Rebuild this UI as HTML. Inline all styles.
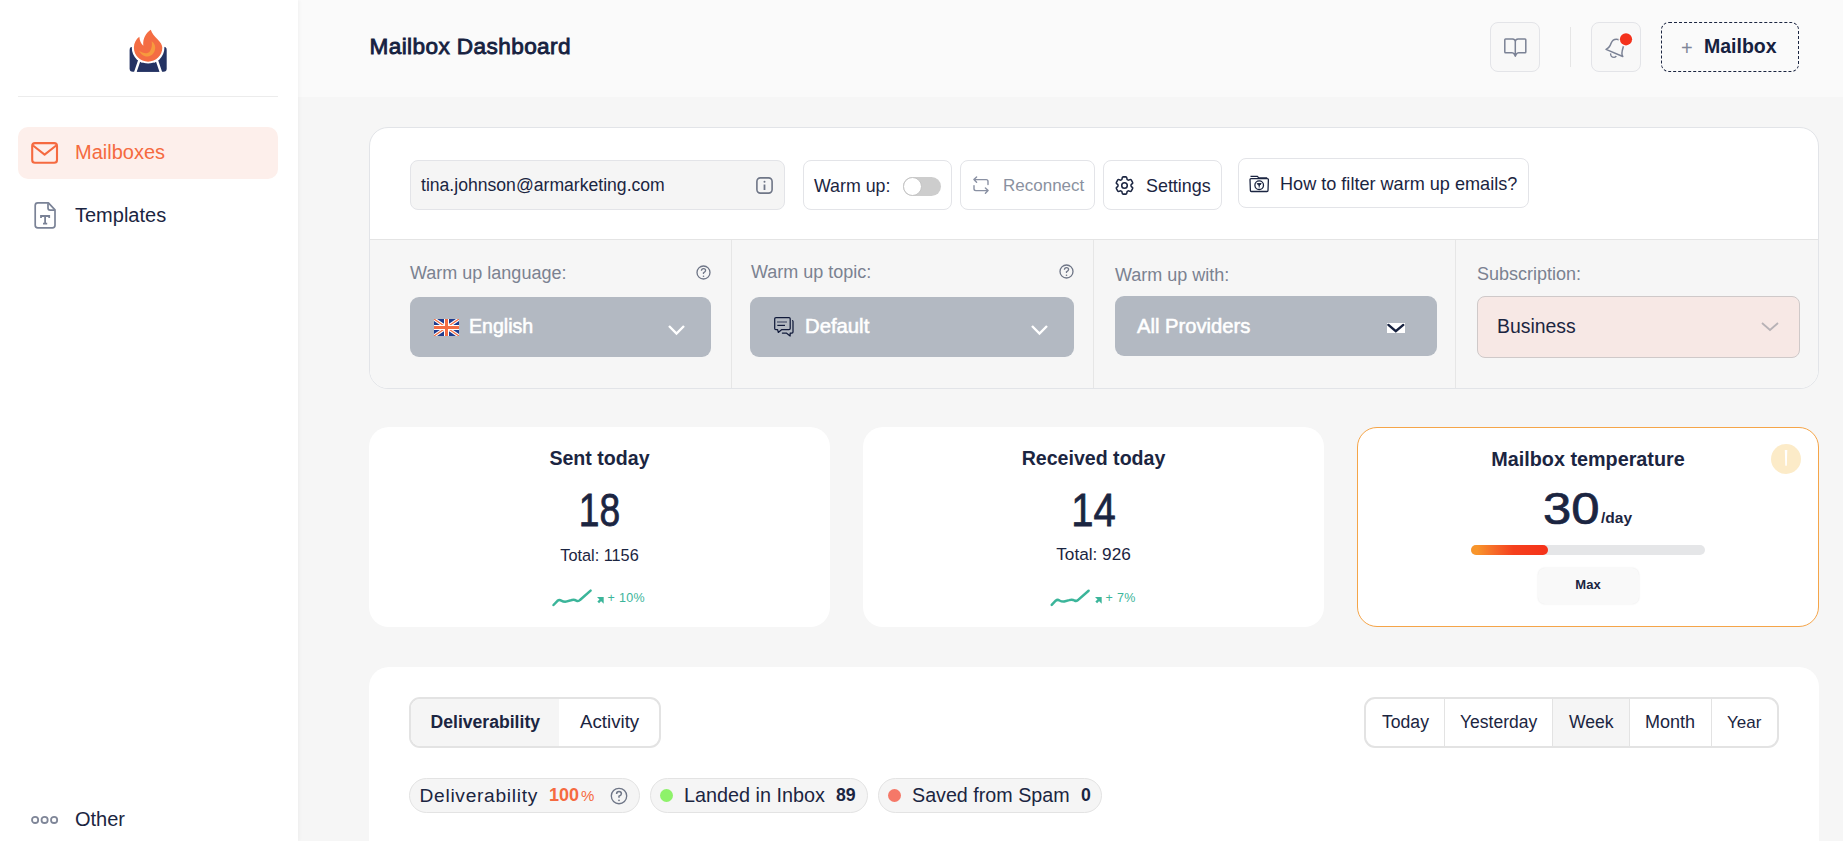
<!DOCTYPE html>
<html><head><meta charset="utf-8">
<style>
*{box-sizing:border-box;margin:0;padding:0}
html,body{width:1843px;height:841px;overflow:hidden;background:#f6f6f6;font-family:"Liberation Sans",sans-serif;color:#1b2541}
.a{position:absolute}
.t{position:absolute;white-space:nowrap;line-height:1}
.sb{left:0;top:0;width:298px;height:841px;background:#fff;box-shadow:1px 0 4px rgba(0,0,0,0.045)}
.hdr{left:298px;top:0;width:1545px;height:97px;background:#fafafa}
.card{background:#fff;border-radius:20px}
.btn{position:absolute;border:1px solid #e3e4e8;border-radius:8px;background:#fff}
.lbl{color:#7b8291;font-size:18px}
.sel{position:absolute;background:#b3b9c2;border-radius:9px}
.sel .t{color:#fff;font-weight:bold;font-size:19px}
.stat{position:absolute;top:427px;width:461px;height:200px;background:#fff;border-radius:20px}
.stat .t{left:0;width:100%;text-align:center}
.tabs{position:absolute;border:2px solid #e3e3e3;border-radius:11px;overflow:hidden;background:#fff}
.pill{position:absolute;top:778px;height:35px;border:1px solid #e3e3e3;border-radius:18px;background:#f5f5f5}
</style></head><body>

<!-- SIDEBAR -->
<div class="a hdr"></div>
<div class="a sb"></div>
<svg class="a" style="left:125px;top:25px" width="46" height="50" viewBox="125 25 46 50">
  <rect x="129.6" y="46.8" width="37.1" height="24.9" rx="3.2" fill="#243363"/>
  <circle cx="148.1" cy="47.6" r="16.3" fill="#fff"/>
  <path d="M139.6 59.5 L135.2 72.5 M156.6 59.5 L161 72.5" stroke="#fff" stroke-width="2.4"/>
  <path d="M142.5 62.6 Q148.1 64.6 153.7 62.6 L159.3 71.7 L136.9 71.7Z" fill="#243363"/>
  <path d="M148.1 61.7 C140.2 61.7 133.9 55.5 133.9 47.8 C133.9 43 136 39.3 139.3 36.8 C139.7 40.8 141 43.8 143.3 45.8 C142.6 38.5 146 33 150.8 29.8 C151.8 33.5 154.5 36.3 157.5 39.2 C160.5 42 162.3 45 162.3 47.8 C162.3 55.5 156 61.7 148.1 61.7Z" fill="#f46d43"/>
  <path d="M139 50.8 C141.5 55.2 144.5 56.6 147.5 56.5 C152.3 56.2 155.3 52 155.2 47.3 C155 44.6 153.6 42.6 151.6 41.3 C152.3 44.2 152 48.2 150 51.2 C147.4 54.4 143.2 53.6 139 50.8Z" fill="#f79a3e"/>
</svg>
<div class="a" style="left:18px;top:96px;width:260px;height:1px;background:#ececec"></div>
<div class="a" style="left:18px;top:127px;width:260px;height:52px;border-radius:10px;background:#fdefeb"></div>
<svg class="a" style="left:28px;top:138px" width="34" height="30" viewBox="28 138 34 30">
  <rect x="32.2" y="143.1" width="24.8" height="19.7" rx="2.8" fill="none" stroke="#f56a40" stroke-width="2.1"/>
  <path d="M33 145.5 L44.6 154.6 L56.2 145.5" fill="none" stroke="#f56a40" stroke-width="2.1" stroke-linejoin="round"/>
</svg>
<div class="t" style="left:75px;top:142px;font-size:20px;color:#f56a40">Mailboxes</div>
<svg class="a" style="left:28px;top:198px" width="34" height="36" viewBox="28 198 34 36">
  <path d="M37.8 202.9 L48.4 202.9 L55 209.8 L55 225.2 Q55 227.8 52.4 227.8 L37.8 227.8 Q35.2 227.8 35.2 225.2 L35.2 205.5 Q35.2 202.9 37.8 202.9Z" fill="none" stroke="#7a8296" stroke-width="1.7" stroke-linejoin="round"/>
  <path d="M48 203.2 L48 208 Q48 210.2 50.2 210.2 L54.8 210.2" fill="none" stroke="#7a8296" stroke-width="1.7" stroke-linejoin="round"/>
  <path d="M41 218 L41 216 L49.2 216 L49.2 218 M45.1 216 L45.1 223.6 M43 223.6 L47.2 223.6" fill="none" stroke="#7a8296" stroke-width="1.8"/>
</svg>
<div class="t" style="left:75px;top:205px;font-size:20px;color:#1b2541">Templates</div>
<svg class="a" style="left:30px;top:814px" width="30" height="11" viewBox="0 0 30 11">
  <circle cx="5.1" cy="5.9" r="3.1" fill="none" stroke="#7f8698" stroke-width="1.8"/>
  <circle cx="14.6" cy="5.9" r="3.1" fill="none" stroke="#7f8698" stroke-width="1.8"/>
  <circle cx="24.1" cy="5.9" r="3.1" fill="none" stroke="#7f8698" stroke-width="1.8"/>
</svg>
<div class="t" style="left:75px;top:809px;font-size:20px;color:#1b2541">Other</div>

<!-- HEADER -->
<div class="t" style="left:369.5px;top:35.8px;font-size:22.6px;letter-spacing:0.4px;-webkit-text-stroke:0.85px #16213f;color:#16213f">Mailbox Dashboard</div>
<div class="btn" style="left:1490px;top:22px;width:50px;height:50px;background:#f8f8f8"></div>
<div class="a" style="left:1570px;top:27px;width:1px;height:40px;background:#e6e6e6"></div>
<div class="btn" style="left:1591px;top:22px;width:50px;height:50px;background:#f8f8f8"></div>
<div class="a" style="left:1661px;top:22px;width:138px;height:50px;border:1.5px dashed #1b2541;border-radius:8px"></div>
<div class="t" style="left:1681px;top:37.5px;font-size:20px;color:#7f8698">+</div>
<div class="t" style="left:1704px;top:37px;font-size:19.5px;font-weight:bold;color:#16213f">Mailbox</div>


<!-- CARD 1 -->
<div class="a" style="left:369px;top:127px;width:1450px;height:262px;background:#fff;border:1px solid #e2e4e8;border-radius:19px;overflow:hidden">
  <div class="a" style="left:0;top:111px;width:1450px;height:150px;background:#f6f6f6;border-top:1px solid #e4e4e4"></div>
  <div class="a" style="left:361px;top:112px;width:1px;height:150px;background:#e6e6e6"></div>
  <div class="a" style="left:723px;top:112px;width:1px;height:150px;background:#e6e6e6"></div>
  <div class="a" style="left:1085px;top:112px;width:1px;height:150px;background:#e6e6e6"></div>
</div>
<div class="btn" style="left:410px;top:160px;width:375px;height:50px;background:#f5f5f5"></div>
<div class="t" style="left:421px;top:177px;font-size:17.6px">tina.johnson@armarketing.com</div>
<svg class="a" style="left:756px;top:177px" width="17" height="17" viewBox="0 0 17 17">
  <rect x="0.9" y="0.9" width="15.2" height="15.2" rx="3.5" fill="none" stroke="#6f7687" stroke-width="1.6"/>
  <path d="M8.5 7.5 L8.5 13" stroke="#6f7687" stroke-width="1.8"/><circle cx="8.5" cy="4.8" r="1" fill="#6f7687"/>
</svg>
<div class="btn" style="left:803px;top:160px;width:149px;height:50px"></div>
<div class="t" style="left:814px;top:178px;font-size:17.8px">Warm up:</div>
<div class="a" style="left:903px;top:177px;width:38px;height:19px;border-radius:10px;background:#cdcdcd"></div>
<div class="a" style="left:903px;top:177px;width:19px;height:19px;border-radius:50%;background:#fff;border:1px solid #c4c4c4"></div>

<div class="btn" style="left:960px;top:160px;width:135px;height:50px"></div>
<svg class="a" style="left:965px;top:170px" width="30" height="30" viewBox="965 170 30 30">
  <path d="M976.6 176.9 L973.9 179.6 L976.6 182.3 M973.9 179.6 L986.2 179.6 Q988 179.6 988 181.4 L988 184.6" fill="none" stroke="#8a91a3" stroke-width="1.4" stroke-linecap="round" stroke-linejoin="round"/>
  <path d="M985.4 187.9 L988.1 190.6 L985.4 193.3 M988.1 190.6 L975.8 190.6 Q974 190.6 974 188.8 L974 185.6" fill="none" stroke="#8a91a3" stroke-width="1.4" stroke-linecap="round" stroke-linejoin="round"/>
</svg>
<div class="t" style="left:1003px;top:177px;font-size:17px;color:#8a91a0">Reconnect</div>

<div class="btn" style="left:1103px;top:160px;width:119px;height:50px"></div>
<svg class="a" style="left:1112.5px;top:173.5px" width="23" height="23" viewBox="0 0 24 24">
  <path d="M9.594 3.94c.09-.542.56-.94 1.110-.94h2.593c.55 0 1.02.398 1.11.94l.213 1.281c.063.374.313.686.645.87.074.04.147.083.22.127.325.196.72.257 1.075.124l1.217-.456a1.125 1.125 0 0 1 1.37.49l1.296 2.247a1.125 1.125 0 0 1-.26 1.431l-1.003.827c-.293.241-.438.613-.43.992a7.723 7.723 0 0 1 0 .255c-.008.378.137.75.43.991l1.004.827c.424.35.534.955.26 1.43l-1.298 2.247a1.125 1.125 0 0 1-1.369.491l-1.217-.456c-.355-.133-.75-.072-1.076.124a6.470 6.470 0 0 1-.22.128c-.331.183-.581.495-.644.869l-.213 1.281c-.09.543-.56.94-1.110.94h-2.594c-.55 0-1.019-.398-1.110-.94l-.213-1.281c-.062-.374-.312-.686-.644-.87a6.520 6.520 0 0 1-.22-.127c-.325-.196-.72-.257-1.076-.124l-1.217.456a1.125 1.125 0 0 1-1.369-.49l-1.297-2.247a1.125 1.125 0 0 1 .26-1.431l1.004-.827c.292-.24.437-.613.43-.991a6.932 6.932 0 0 1 0-.255c.007-.38-.138-.751-.43-.992l-1.004-.827a1.125 1.125 0 0 1-.26-1.430l1.297-2.247a1.125 1.125 0 0 1 1.370-.491l1.216.456c.356.133.751.072 1.076-.124.072-.044.146-.086.22-.128.332-.183.582-.495.644-.869l.214-1.280Z" fill="none" stroke="#1b2541" stroke-width="1.6" stroke-linejoin="round"/>
  <circle cx="12" cy="12" r="2.9" fill="none" stroke="#1b2541" stroke-width="1.6"/>
</svg>
<div class="t" style="left:1146px;top:178px;font-size:17.9px">Settings</div>

<div class="btn" style="left:1238px;top:158px;width:291px;height:50px"></div>
<svg class="a" style="left:1245px;top:172px" width="28" height="24" viewBox="1245 172 28 24">
  <path d="M1250.5 176.3 L1257.5 176.3 L1258.6 177.8 L1267.2 177.8" fill="none" stroke="#1b2541" stroke-width="1.2" stroke-linejoin="round"/>
  <path d="M1250 179.5 Q1250 178.6 1251 178.6 L1267.3 178.6 Q1268.4 178.6 1268.4 179.6 L1268 190.6 Q1268 191.5 1267 191.5 L1251.4 191.5 Q1250.4 191.5 1250.4 190.6Z" fill="none" stroke="#1b2541" stroke-width="1.3" stroke-linejoin="round"/>
  <circle cx="1259.2" cy="185.2" r="4.3" fill="none" stroke="#1b2541" stroke-width="1.3"/>
  <path d="M1257.2 183.6 L1261.2 183.6 L1259.2 185.8Z M1259.2 185.5 L1259.2 187.6" fill="#1b2541" stroke="#1b2541" stroke-width="1"/>
</svg>
<div class="t" style="left:1280px;top:174.5px;font-size:18.1px">How to filter warm up emails?</div>

<!-- labels -->
<div class="t lbl" style="left:410px;top:263.5px">Warm up language:</div>
<div class="t lbl" style="left:751px;top:262.5px">Warm up topic:</div>
<div class="t lbl" style="left:1115px;top:265.5px">Warm up with:</div>
<div class="t lbl" style="left:1477px;top:265px">Subscription:</div>
<svg class="a" style="left:696px;top:265px" width="15" height="15" viewBox="0 0 15 15">
  <circle cx="7.5" cy="7.5" r="6.5" fill="none" stroke="#6f7687" stroke-width="1.3"/>
  <path d="M5.4 5.8 Q5.4 3.6 7.5 3.6 Q9.6 3.6 9.6 5.6 Q9.6 6.9 7.5 7.8 L7.5 9" fill="none" stroke="#6f7687" stroke-width="1.3"/>
  <circle cx="7.5" cy="11.2" r="0.8" fill="#6f7687"/>
</svg>
<svg class="a" style="left:1059px;top:264px" width="15" height="15" viewBox="0 0 15 15">
  <circle cx="7.5" cy="7.5" r="6.5" fill="none" stroke="#6f7687" stroke-width="1.3"/>
  <path d="M5.4 5.8 Q5.4 3.6 7.5 3.6 Q9.6 3.6 9.6 5.6 Q9.6 6.9 7.5 7.8 L7.5 9" fill="none" stroke="#6f7687" stroke-width="1.3"/>
  <circle cx="7.5" cy="11.2" r="0.8" fill="#6f7687"/>
</svg>

<!-- selects -->
<div class="sel" style="left:410px;top:297px;width:301px;height:60px"></div>
<svg class="a" style="left:434px;top:319px" width="25" height="17" viewBox="0 0 25 17">
  <rect width="25" height="17" fill="#1f3c8f"/>
  <path d="M0 0 L25 17 M25 0 L0 17" stroke="#fff" stroke-width="3.4"/>
  <path d="M0 0 L25 17 M25 0 L0 17" stroke="#f46d43" stroke-width="1.2"/>
  <path d="M12.5 0 L12.5 17 M0 8.5 L25 8.5" stroke="#fff" stroke-width="5"/>
  <path d="M12.5 0 L12.5 17 M0 8.5 L25 8.5" stroke="#f46d43" stroke-width="3"/>
</svg>
<div class="t" style="left:469px;top:316.6px;font-size:19.6px;color:#fff;-webkit-text-stroke:0.55px #fff">English</div>
<svg class="a" style="left:667px;top:324px" width="19" height="12" viewBox="0 0 19 12">
  <path d="M2 2 L9.5 9.5 L17 2" fill="none" stroke="#fff" stroke-width="2.4"/>
</svg>

<div class="sel" style="left:750px;top:297px;width:324px;height:60px"></div>
<svg class="a" style="left:768px;top:312px" width="32" height="30" viewBox="768 312 32 30">
  <path d="M776 317.6 L789 317.6 Q790.2 317.6 790.2 318.8 L790.2 328.5 Q790.2 329.6 789 329.6 L781.8 329.6 L778.3 332.4 L777.6 329.6 L775.9 329.6 Q774.7 329.6 774.7 328.4 L774.7 318.8 Q774.7 317.6 776 317.6Z" fill="none" stroke="#111a3a" stroke-width="1.25" stroke-linejoin="round"/>
  <path d="M792.6 320.6 Q793 321 793 321.6 L793 332 Q793 333.1 791.9 333.1 L790.2 333.1 L790.1 336 L786.3 333.1 L782.4 333.1" fill="none" stroke="#111a3a" stroke-width="1.25" stroke-linejoin="round" stroke-linecap="round"/>
  <path d="M777.3 322 L787.3 322" stroke="#3c4560" stroke-width="1.3" stroke-dasharray="1.4 0.6"/>
  <path d="M777.3 325.4 L785 325.4" stroke="#111a3a" stroke-width="1.2"/>
</svg>
<div class="t" style="left:805px;top:316.0px;font-size:20.3px;color:#fff;-webkit-text-stroke:0.55px #fff">Default</div>
<svg class="a" style="left:1030px;top:324px" width="19" height="12" viewBox="0 0 19 12">
  <path d="M2 2 L9.5 9.5 L17 2" fill="none" stroke="#fff" stroke-width="2.4"/>
</svg>

<div class="sel" style="left:1115px;top:296px;width:322px;height:60px"></div>
<div class="t" style="left:1137px;top:316.1px;font-size:20.2px;color:#fff;-webkit-text-stroke:0.55px #fff">All Providers</div>
<div class="a" style="left:1387px;top:323px;width:18px;height:10px;background:#fff"></div>
<svg class="a" style="left:1385px;top:321px" width="22" height="14" viewBox="1385 321 22 14">
  <path d="M1388.4 324.9 L1395.8 331.2 L1403.3 324.9" fill="none" stroke="#16213f" stroke-width="2.4" stroke-linecap="round"/>
</svg>

<div class="a" style="left:1477px;top:296px;width:323px;height:62px;background:#f7e8e5;border:1px solid #cfc9c9;border-radius:8px"></div>
<div class="t" style="left:1497px;top:317px;font-size:19.4px">Business</div>
<svg class="a" style="left:1760px;top:320px" width="20" height="13" viewBox="0 0 20 13">
  <path d="M2 3 L10 10 L18 3" fill="none" stroke="#b7b2b6" stroke-width="1.8"/>
</svg>


<!-- header icons -->
<svg class="a" style="left:1495px;top:27px" width="40" height="40" viewBox="1495 27 40 40">
  <path d="M1515.3 41.5 Q1515.2 39 1512.5 38.9 L1505.6 38.9 Q1504.8 38.9 1504.8 39.7 L1504.8 52 Q1504.8 52.8 1505.6 52.8 L1512 52.8 Q1513.4 52.8 1514.2 54 L1515.3 56.2 L1515.3 41.5 Q1515.4 39 1518.1 38.9 L1525 38.9 Q1525.8 38.9 1525.8 39.7 L1525.8 52 Q1525.8 52.8 1525 52.8 L1518.6 52.8 Q1517.2 52.8 1516.4 54 L1515.3 56.2" fill="none" stroke="#7b8295" stroke-width="1.5" stroke-linejoin="round" stroke-linecap="round"/>
</svg>
<svg class="a" style="left:1595px;top:25px" width="45" height="40" viewBox="1595 25 45 40">
  <path d="M1606 49.4 C1609 48.2 1610.2 45.8 1611.2 43 C1612.6 39.6 1616 38.6 1619.5 39.8 L1624.5 42.5 C1623.6 46.5 1621.9 50 1621.9 53.3 C1621.9 54.9 1622.3 55.9 1622.8 56.5 Z" fill="none" stroke="#7b8295" stroke-width="1.5" stroke-linejoin="round"/>
  <path d="M1610.6 53.4 Q1610.4 57.4 1614.2 57.4 Q1615.8 57.2 1616.2 56" fill="none" stroke="#7b8295" stroke-width="1.4"/>
  <circle cx="1626" cy="39.3" r="7.4" fill="#fafafa"/>
  <circle cx="1626" cy="39.3" r="6.1" fill="#f4321c"/>
</svg>

<!-- STAT CARDS -->
<div class="stat" style="left:369px">
  <div class="t" style="top:22.3px;font-size:19.6px;font-weight:bold">Sent today</div>
  <div class="t" style="top:60px;font-size:46.5px;transform:scaleX(0.8);-webkit-text-stroke:0.8px #1b2541">18</div>
  <div class="t" style="top:119.5px;font-size:16.3px">Total: 1156</div>
</div>
<div class="stat" style="left:863px">
  <div class="t" style="top:22.3px;font-size:19.6px;font-weight:bold">Received today</div>
  <div class="t" style="top:60px;font-size:46.5px;transform:scaleX(0.86);-webkit-text-stroke:0.8px #1b2541">14</div>
  <div class="t" style="top:118.7px;font-size:17.2px">Total: 926</div>
</div>
<svg class="a" style="left:550px;top:586px" width="60" height="22" viewBox="550 586 60 22">
  <path d="M553.5 605 L557.5 600.8 Q559.3 599.3 561.3 600.6 Q563.5 601.8 566 601.6 L571 600.2 Q574 599.2 576.3 600.6 Q578.5 601.6 580 600 L590.6 590.6" fill="none" stroke="#3bb59a" stroke-width="2.5" stroke-linecap="round" stroke-linejoin="round"/>
  <path d="M597 597.1 L603.7 597.1 L603.7 603.8Z" fill="#3bb59a"/>
  <path d="M598.2 602.4 L601.6 599" stroke="#3bb59a" stroke-width="2.4"/>
</svg>
<div class="t" style="left:607.5px;top:591.5px;font-size:12.5px;color:#3bb59a">+</div>
<div class="t" style="left:619px;top:591.5px;font-size:12.5px;color:#3bb59a;letter-spacing:0.3px">10%</div>
<svg class="a" style="left:1048px;top:586px" width="60" height="22" viewBox="1048 586 60 22">
  <path d="M1051.7 604.9 L1055.7 600.7 Q1057.5 599.2 1059.5 600.5 Q1061.7 601.7 1064.2 601.5 L1069.2 600.1 Q1072.2 599.1 1074.5 600.5 Q1076.7 601.5 1078.2 599.9 L1088.6 590.7" fill="none" stroke="#3bb59a" stroke-width="2.5" stroke-linecap="round" stroke-linejoin="round"/>
  <path d="M1095 597.1 L1101.7 597.1 L1101.7 603.8Z" fill="#3bb59a"/>
  <path d="M1096.2 602.4 L1099.6 599" stroke="#3bb59a" stroke-width="2.4"/>
</svg>
<div class="t" style="left:1105.5px;top:591.5px;font-size:12.5px;color:#3bb59a">+</div>
<div class="t" style="left:1117px;top:591.5px;font-size:12.5px;color:#3bb59a;letter-spacing:0.3px">7%</div>

<div class="stat" style="left:1357px;width:462px;border:1px solid #f5a549">
  <div class="t" style="top:21.5px;font-size:19.8px;font-weight:bold">Mailbox temperature</div>
</div>
<div class="a" style="left:1771px;top:444px;width:30px;height:30px;border-radius:50%;background:#fcebc8"></div>
<svg class="a" style="left:1780px;top:448px" width="12" height="20" viewBox="1780 448 12 20"><path d="M1784.8 450 L1787.3 450 L1786.8 465.8 L1785.3 465.8Z" fill="#fff"/></svg>
<div class="t" style="left:1543px;top:485.5px;font-size:45px;transform-origin:left;transform:scaleX(1.13);-webkit-text-stroke:0.7px #1b2541">30</div>
<div class="t" style="left:1601px;top:510px;font-size:15.5px;font-weight:bold">/day</div>
<div class="a" style="left:1471px;top:545px;width:234px;height:10px;border-radius:5px;background:#e5e6e8"></div>
<div class="a" style="left:1471px;top:545px;width:77px;height:10px;border-radius:5px;background:linear-gradient(90deg,#f8952b 0%,#f8952b 8%,#f66a28 30%,#f5401d 55%,#f5321a 100%)"></div>
<div class="a" style="left:1537.5px;top:567.5px;width:101.5px;height:36.3px;border-radius:7px;background:#f9f9f9;box-shadow:0 0 2px rgba(0,0,0,0.1)"></div>
<div class="t" style="left:1537px;top:578px;width:102px;text-align:center;font-size:13px;font-weight:bold">Max</div>

<!-- BOTTOM CARD -->
<div class="a" style="left:369px;top:667px;width:1450px;height:200px;background:#fff;border-radius:20px"></div>
<div class="tabs" style="left:409px;top:697px;width:252px;height:51px">
  <div class="a" style="left:0;top:0;width:148px;height:47px;background:#f5f5f5"></div>
  <div class="t" style="left:19.5px;top:14.5px;font-size:17.6px;font-weight:bold">Deliverability</div>
  <div class="t" style="left:169px;top:13.7px;font-size:18.7px">Activity</div>
</div>
<div class="tabs" style="left:1364px;top:697px;width:415px;height:51px">
  <div class="a" style="left:187px;top:0;width:77px;height:47px;background:#f5f5f5"></div>
  <div class="a" style="left:78px;top:0;width:1px;height:47px;background:#e3e3e3"></div>
  <div class="a" style="left:186px;top:0;width:1px;height:47px;background:#e3e3e3"></div>
  <div class="a" style="left:263px;top:0;width:1px;height:47px;background:#e3e3e3"></div>
  <div class="a" style="left:345px;top:0;width:1px;height:47px;background:#e3e3e3"></div>
  <div class="t" style="left:16px;top:15px;font-size:17.6px">Today</div>
  <div class="t" style="left:94px;top:15px;font-size:17.5px">Yesterday</div>
  <div class="t" style="left:203px;top:15px;font-size:17.6px">Week</div>
  <div class="t" style="left:279px;top:14.2px;font-size:18px">Month</div>
  <div class="t" style="left:361px;top:15px;font-size:17px">Year</div>
</div>

<div class="pill" style="left:409px;width:231px"></div>
<div class="t" style="left:419.5px;top:786px;font-size:19.2px;letter-spacing:0.7px">Deliverability</div>
<div class="t" style="left:549px;top:785.9px;font-size:18px;color:#f56a40;font-weight:bold">100</div>
<div class="t" style="left:581px;top:787.6px;font-size:15px;color:#f56a40">%</div>
<svg class="a" style="left:610px;top:787px" width="18" height="18" viewBox="0 0 18 18">
  <circle cx="9" cy="9" r="7.7" fill="none" stroke="#6f7687" stroke-width="1.35"/>
  <path d="M6.6 7 Q6.6 4.5 9 4.5 Q11.4 4.5 11.4 6.8 Q11.4 8.3 9 9.3 L9 10.8" fill="none" stroke="#6f7687" stroke-width="1.5"/>
  <circle cx="9" cy="13.3" r="0.9" fill="#6f7687"/>
</svg>
<div class="pill" style="left:650px;width:218px"></div>
<div class="a" style="left:660px;top:789px;width:13px;height:13px;border-radius:50%;background:#8ef26a"></div>
<div class="t" style="left:684px;top:786px;font-size:19.8px">Landed in Inbox</div>
<div class="t" style="left:836px;top:787px;font-size:17.7px;font-weight:bold">89</div>
<div class="pill" style="left:878px;width:224px"></div>
<div class="a" style="left:888px;top:789px;width:13px;height:13px;border-radius:50%;background:#f57868"></div>
<div class="t" style="left:912px;top:786px;font-size:19.7px">Saved from Spam</div>
<div class="t" style="left:1081px;top:787px;font-size:17.7px;font-weight:bold">0</div>

</body></html>
